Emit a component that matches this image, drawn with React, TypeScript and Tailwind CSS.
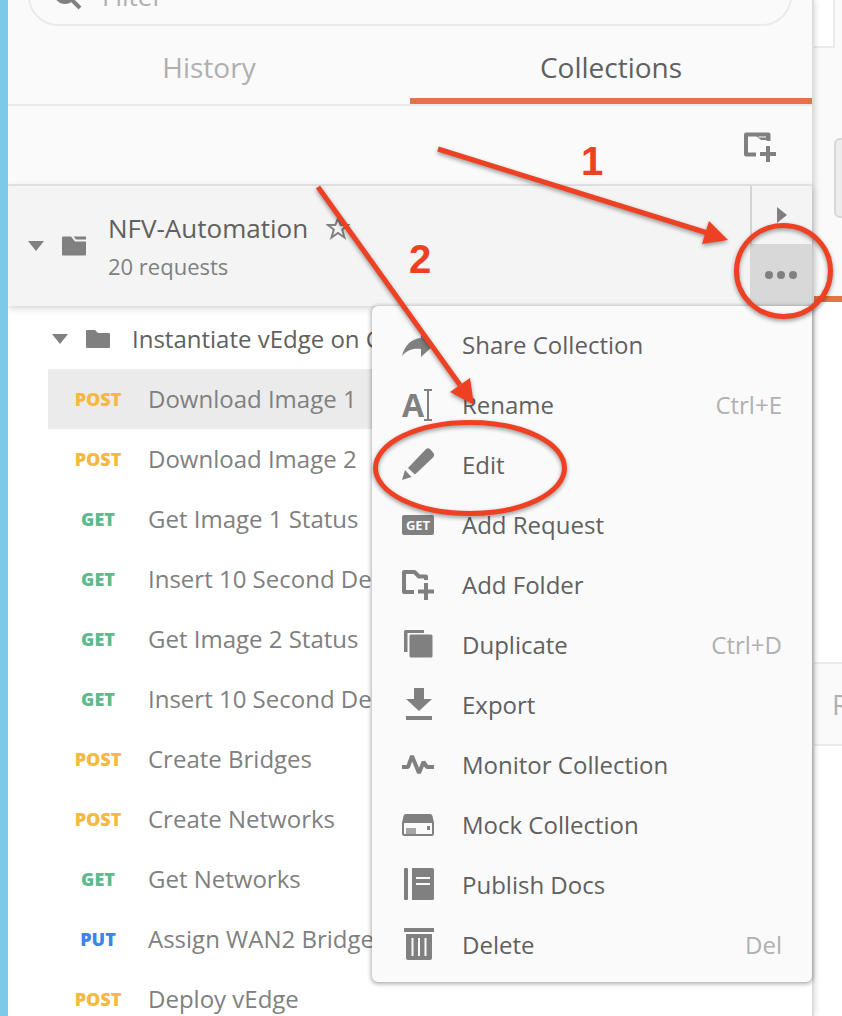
import type { ReactNode } from "react";

type Method = "POST" | "GET" | "PUT";

const methodColors: Record<Method, string> = {
  POST: "text-[#f5b842]",
  GET: "text-[#5dba8d]",
  PUT: "text-[#3f83e8]",
};

const requests: { method: Method; name: string; active?: boolean }[] = [
  { method: "POST", name: "Download Image 1", active: true },
  { method: "POST", name: "Download Image 2" },
  { method: "GET", name: "Get Image 1 Status" },
  { method: "GET", name: "Insert 10 Second Delay" },
  { method: "GET", name: "Get Image 2 Status" },
  { method: "GET", name: "Insert 10 Second Delay" },
  { method: "POST", name: "Create Bridges" },
  { method: "POST", name: "Create Networks" },
  { method: "GET", name: "Get Networks" },
  { method: "PUT", name: "Assign WAN2 Bridge" },
  { method: "POST", name: "Deploy vEdge" },
];

function Icon({ children }: { children: ReactNode }) {
  return (
    <svg viewBox="0 0 32 32" className="size-8 overflow-visible" fill="currentColor" aria-hidden="true">
      {children}
    </svg>
  );
}

function CaretDown() {
  return (
    <svg viewBox="0 0 16 10" className="h-[10px] w-4" aria-hidden="true">
      <path d="M0 0H16L8 10Z" fill="#808080" />
    </svg>
  );
}

const menuItems: { label: string; shortcut?: string; icon: ReactNode }[] = [
  {
    label: "Share Collection",
    icon: (
      <Icon>
        <path d="M0 27C3 16 9 10 19 9V3L32 16L19 28V20C11 19 5 21 0 27Z" />
      </Icon>
    ),
  },
  {
    label: "Rename",
    shortcut: "Ctrl+E",
    icon: (
      <span className="flex h-8 items-center" aria-hidden="true">
        <span className="text-[32px] leading-8 font-bold">A</span>
        <svg viewBox="0 0 8 32" className="h-8 w-2" fill="none" stroke="currentColor" strokeWidth="2">
          <path d="M0 1H8M0 31H8M4 1V31" />
        </svg>
      </span>
    ),
  },
  {
    label: "Edit",
    icon: (
      <Icon>
        <path d="M6 19L24 0Q26 -1.500 28 0L31.500 4Q33 6 31.500 8L13 25.500Z" />
        <path d="M3 21L9.500 28L0 31Z" />
      </Icon>
    ),
  },
  {
    label: "Add Request",
    icon: (
      <span
        className="flex h-5 w-8 items-center justify-center rounded-xs bg-[#808080] text-[13px] leading-5 font-bold text-[#fafafa]"
        aria-hidden="true"
      >
        GET
      </span>
    ),
  },
  {
    label: "Add Folder",
    icon: (
      <Icon>
        <path
          d="M12 23H2V3H12.500L17 7.500H24V11M24 14V31M16 22.500H32"
          fill="none"
          stroke="currentColor"
          strokeWidth="4"
          strokeLinejoin="round"
        />
      </Icon>
    ),
  },
  {
    label: "Duplicate",
    shortcut: "Ctrl+D",
    icon: (
      <Icon>
        <path d="M2 23V2.500Q2 1 3.500 1H22V4H5.500V23Z" />
        <rect x="7.500" y="5.500" width="23" height="23" rx="1.500" />
      </Icon>
    ),
  },
  {
    label: "Export",
    icon: (
      <Icon>
        <path d="M12 -1H22V10H30L17 22L4 10H12Z" />
        <rect x="4" y="27" width="26" height="4" />
      </Icon>
    ),
  },
  {
    label: "Monitor Collection",
    icon: (
      <Icon>
        <path
          d="M0 18H6L10 7L17 24L21.500 13L25 18H32"
          fill="none"
          stroke="currentColor"
          strokeWidth="4"
          strokeLinejoin="bevel"
        />
      </Icon>
    ),
  },
  {
    label: "Mock Collection",
    icon: (
      <Icon>
        <path d="M4 5H28Q30 5 30.500 7L32 14H0L1.500 7Q2 5 4 5Z" />
        <rect x="1" y="13" width="30" height="13" rx="1.500" fill="none" stroke="currentColor" strokeWidth="2" />
        <rect x="4" y="19" width="10" height="6" opacity="0.7" />
        <rect x="25" y="17" width="3" height="4" />
      </Icon>
    ),
  },
  {
    label: "Publish Docs",
    icon: (
      <Icon>
        <rect x="2" y="-1" width="4" height="32" rx="1" />
        <path
          fillRule="evenodd"
          d="M10 -1H30.500Q32 -1 32 0.500V29.500Q32 31 30.500 31H10ZM14 8V10H28V8ZM14 14V16H28V14Z"
        />
      </Icon>
    ),
  },
  {
    label: "Delete",
    shortcut: "Del",
    icon: (
      <Icon>
        <rect x="2" y="-1" width="30" height="4" />
        <path
          fillRule="evenodd"
          d="M4 5H30V29Q30 31 28 31H6Q4 31 4 29ZM9.500 9V27H11.500V9ZM16 9V27H18V9ZM22.500 9V27H24.500V9Z"
        />
      </Icon>
    ),
  },
];

function CollectionMenu() {
  return (
    <ul
      role="menu"
      className="absolute top-full right-0 z-20 w-[440px] rounded-b-md rounded-tl-md bg-[#fafafa] pt-[9px] pb-[7px] shadow-[0_1px_4px_1px_rgba(0,0,0,0.32)]"
    >
      {menuItems.map((item) => (
        <li key={item.label} role="none">
          <button
            type="button"
            role="menuitem"
            className="flex h-[60px] w-full items-center px-[30px] text-left text-2xl text-[#606060]"
          >
            <span className="mr-7 flex w-8 shrink-0 items-center text-[#808080]">{item.icon}</span>
            <span className="flex-1">{item.label}</span>
            {item.shortcut && <span className="text-[#b0b0b0]">{item.shortcut}</span>}
          </button>
        </li>
      ))}
    </ul>
  );
}

function CollectionHeader() {
  return (
    <section className="relative z-10 flex h-[120px] shrink-0 bg-[#f4f4f4] shadow-[0_2px_8px_rgba(0,0,0,0.18)]">
      <div className="flex flex-1 items-center pl-5">
        <button type="button" aria-label="Collapse collection">
          <CaretDown />
        </button>
        <svg viewBox="0 0 24 20" className="ml-[18px] h-5 w-6" fill="#808080" aria-hidden="true">
          <path d="M0 1.500Q0 0.500 1 0.500H9L13 5.500H24V18.500Q24 19.500 23 19.500H1Q0 19.500 0 18.500Z" />
          <path d="M11.500 0.500H24V3.500H14Z" />
        </svg>
        <div className="ml-[22px]">
          <div className="flex items-center gap-[18px]">
            <h2 className="text-[26px] leading-10 text-[#606060]">NFV-Automation</h2>
            <button type="button" aria-label="Mark as favorite">
              <svg viewBox="0 0 24 24" className="size-6" fill="none" stroke="#808080" strokeWidth="2" aria-hidden="true">
                <path d="M12 2.500L14.700 9H22L16.200 13.500L18.500 21.500L12 17L5.500 21.500L7.800 13.500L2 9H9.300Z" />
              </svg>
            </button>
          </div>
          <p className="text-[22px] leading-9 text-[#808080]">20 requests</p>
        </div>
      </div>
      <div className="flex w-[62px] flex-col">
        <button
          type="button"
          aria-label="Open collection details"
          className="flex h-[58px] items-center justify-center border-l-2 border-[#d4d4d4]"
        >
          <svg viewBox="0 0 10 16" className="h-4 w-[10px]" aria-hidden="true">
            <path d="M0 0L10 8L0 16Z" fill="#808080" />
          </svg>
        </button>
        <button
          type="button"
          aria-label="More actions"
          className="flex h-[62px] items-center justify-center gap-1 bg-[#d8d8d8]"
        >
          <span className="size-2 rounded-full bg-[#808080]" />
          <span className="size-2 rounded-full bg-[#808080]" />
          <span className="size-2 rounded-full bg-[#808080]" />
        </button>
      </div>
      <CollectionMenu />
    </section>
  );
}

function Sidebar() {
  return (
    <aside className="relative z-10 flex min-w-0 flex-1 flex-col border-r-2 border-[#dddddd] bg-white shadow-[1px_0_6px_rgba(0,0,0,0.15)]">
      <div className="flex h-[26px] shrink-0 items-end overflow-hidden bg-[#fafafa] px-5">
        <label className="flex h-[60px] w-full shrink-0 items-center rounded-full border-2 border-[#ebebeb] pl-[22px]">
          <svg viewBox="0 0 32 32" className="size-8" fill="none" stroke="#808080" strokeWidth="4" aria-hidden="true">
            <circle cx="13" cy="13" r="9" />
            <path d="M19 19L28 28" />
          </svg>
          <input
            type="text"
            placeholder="Filter"
            aria-label="Filter"
            className="ml-[18px] min-w-0 flex-1 bg-transparent text-[26px] outline-none placeholder:text-[#b0b0b0]"
          />
        </label>
      </div>
      <div role="tablist" className="grid h-20 shrink-0 grid-cols-2 border-b-2 border-[#ebebeb] bg-[#fafafa] text-[28px]">
        <button type="button" role="tab" aria-selected="false" className="border-b-6 border-transparent pt-2.5 text-[#b0b0b0]">
          History
        </button>
        <button type="button" role="tab" aria-selected="true" className="border-b-6 border-[#e57348] pt-2.5 text-[#606060]">
          Collections
        </button>
      </div>
      <div className="flex h-20 shrink-0 items-center justify-end border-b-2 border-[#e8e8e8] bg-[#fafafa] pt-1 pr-9">
        <button type="button" aria-label="New collection" className="text-[#808080]">
          <Icon>
            <path
              d="M12 23.500H2V3.500H24.500V10M24 15V31M16 23H32"
              fill="none"
              stroke="currentColor"
              strokeWidth="4"
              strokeLinejoin="round"
            />
            <path d="M12 5H25V9H17Z" />
            <path d="M14.500 6H22" stroke="#fafafa" strokeWidth="1" />
          </Icon>
        </button>
      </div>
      <CollectionHeader />
      <div className="pt-[3px]">
        <div className="flex h-[60px] items-center pl-11">
          <button type="button" aria-label="Collapse folder">
            <CaretDown />
          </button>
          <svg viewBox="0 0 24 20" className="ml-[18px] h-5 w-6" fill="#808080" aria-hidden="true">
            <path d="M0 2Q0 1 1 1H9L12 4H23Q24 4 24 5V18Q24 19 23 19H1Q0 19 0 18Z" />
          </svg>
          <span className="ml-[22px] text-2xl text-[#606060]">Instantiate vEdge on CSP</span>
        </div>
        <ul className="pl-10">
          {requests.map((request, index) => (
            <li key={index}>
              <button
                type="button"
                className={`flex h-[60px] w-full items-center text-left ${request.active ? "bg-[#ebebeb]" : "bg-white"}`}
              >
                <span className={`w-[100px] shrink-0 text-center text-lg font-extrabold ${methodColors[request.method]}`}>
                  {request.method}
                </span>
                <span className="text-2xl text-[#808080]">{request.name}</span>
              </button>
            </li>
          ))}
        </ul>
      </div>
    </aside>
  );
}

function Workspace() {
  return (
    <main className="flex w-7 shrink-0 flex-col overflow-hidden bg-white">
      <div className="h-[302px] shrink-0 border-b-6 border-[#e57348] bg-[#fafafa]">
        <div className="h-12 w-[21px] border-r-2 border-b-2 border-[#ebebeb] bg-white" />
        <div className="mt-[90px] ml-5 h-20 w-20 rounded-md border-2 border-[#d8d8d8] bg-[#ececec]" />
      </div>
      <div className="mt-[360px] flex h-[84px] shrink-0 items-center border-y-2 border-[#ebebeb] bg-[#fafafa] pl-[18px] text-[28px] text-[#b0b0b0]">
        Response
      </div>
    </main>
  );
}

function Annotations() {
  return (
    <div className="pointer-events-none absolute inset-y-0 right-0 -left-2 z-30">
      <svg
        viewBox="0 0 842 1016"
        className="h-[1016px] w-[842px] drop-shadow-[0_2px_2px_rgba(0,0,0,0.4)]"
        fill="none"
        stroke="#ee4023"
        strokeWidth="5"
        aria-hidden="true"
      >
        <path d="M438 149L706 232.500M318 187L460 385" />
        <path d="M728 240L709 221L702 244ZM474 405L470 378L450 392Z" fill="#ee4023" stroke="none" />
        <ellipse cx="783.500" cy="271" rx="47" ry="45.500" />
        <ellipse cx="470" cy="468" rx="94.500" ry="45.500" />
      </svg>
      <span className="absolute top-[141px] left-[581px] font-['Liberation_Sans',Arial,sans-serif] text-[40px] leading-10 font-bold text-[#ee4023]">
        1
      </span>
      <span className="absolute top-[239px] left-[409px] font-['Liberation_Sans',Arial,sans-serif] text-[40px] leading-10 font-bold text-[#ee4023]">
        2
      </span>
    </div>
  );
}

export default function App() {
  return (
    <div className="relative flex h-screen overflow-hidden border-l-8 border-[#7ec8e8] bg-white font-['Open_Sans',sans-serif]">
      <Sidebar />
      <Workspace />
      <Annotations />
    </div>
  );
}
